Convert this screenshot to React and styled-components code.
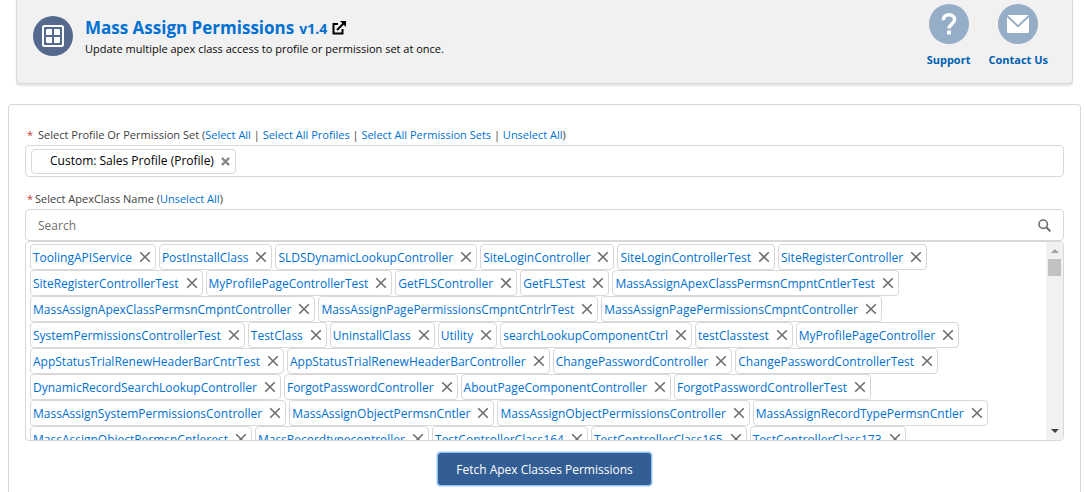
import React from "react";
import styled, { createGlobalStyle } from "styled-components";

const GlobalStyle = createGlobalStyle`
  *, *::before, *::after { box-sizing: border-box; }
  body {
    margin: 0;
    background: #fff;
    color: #3e3e3c;
    font-family: "Open Sans", "Noto Sans", sans-serif;
    font-size: 12px;
    line-height: 18px;
  }
  button, input { font-family: inherit; }
`;

const Page = styled.div`
  min-height: 100vh;
  display: flex;
  flex-direction: column;
  gap: 20px;
  padding: 0 5px 0 8px;
`;

const Header = styled.header`
  display: flex;
  justify-content: space-between;
  align-items: flex-start;
  height: 84px;
  margin: 0 8px;
  padding: 4px 24px 0 16px;
  background: #f1f1f1;
  border: 1px solid #d8d8d8;
  border-top: 0;
  border-radius: 0 0 4px 4px;
  box-shadow: 0 2px 2px rgba(0, 0, 0, 0.1);
`;

const Brand = styled.div`
  display: flex;
  gap: 12px;
  padding-top: 12px;
`;

const RoundIcon = styled.span`
  display: flex;
  align-items: center;
  justify-content: center;
  width: 40px;
  height: 40px;
  border-radius: 50%;
  background: ${(p) => p.$color};
`;

const Title = styled.h1`
  display: flex;
  align-items: baseline;
  gap: 5px;
  margin: 0;
  font-size: 17px;
  line-height: 24px;
  font-weight: 700;
  color: #0070d2;
`;

const Version = styled.span`
  font-size: 14px;
`;

const TitleLink = styled.a`
  align-self: center;
  display: flex;
  padding-bottom: 2px;
  color: #000;
`;

const Tagline = styled.p`
  margin: 0;
  font-size: 11px;
  line-height: 16px;
  color: #080707;
`;

const HelpLinks = styled.nav`
  display: flex;
  gap: 18px;
`;

const HelpLink = styled.a`
  display: flex;
  flex-direction: column;
  align-items: center;
  gap: 7px;
  color: #005fb2;
  font-size: 11px;
  font-weight: 700;
  text-decoration: none;
`;

const Card = styled.main`
  flex: 1;
  display: flex;
  flex-direction: column;
  padding: 20px 16px 4px;
  border: 1px solid #d8d8d8;
  border-bottom: 0;
  border-radius: 4px 4px 0 0;
`;

const FieldLabel = styled.div`
  display: flex;
  gap: ${(p) => p.$gap}px;
  height: 20px;
  padding-left: 2px;
  font-size: 11px;
  line-height: 20px;
  white-space: nowrap;
`;

const Required = styled.abbr`
  color: #c23934;
  text-decoration: none;
`;

const TextAction = styled.a`
  color: #0070d2;
  text-decoration: none;
`;

const TokenBox = styled.div`
  display: flex;
  align-items: center;
  height: 32px;
  margin-bottom: 12px;
  padding: 0 5px;
  border: 1px solid #d8d8d8;
  border-radius: 4px;
`;

const Token = styled.span`
  display: flex;
  align-items: center;
  gap: 7px;
  height: 25px;
  padding: 0 5px 0 18px;
  border: 1px solid #d8d8d8;
  border-radius: 4px;
  font-size: 12px;
  color: #000;
`;

const IconButton = styled.button`
  display: flex;
  padding: 0;
  border: 0;
  background: none;
  color: ${(p) => p.$color || "#706e6b"};
`;

const SearchBox = styled.div`
  display: flex;
  align-items: center;
  height: 32px;
  padding: 0 12px;
  border: 1px solid #d8d8d8;
  border-radius: 4px;
`;

const SearchInput = styled.input`
  flex: 1;
  min-width: 0;
  padding: 0;
  border: 0;
  outline: 0;
  background: none;
  font-size: 12px;
  color: #3e3e3c;
  &::placeholder { color: #706e6b; opacity: 1; }
`;

const ListBox = styled.div`
  display: flex;
  height: 200px;
  border: 1px solid #d8d8d8;
  border-radius: 4px;
  overflow: hidden;
`;

const ChipList = styled.ul`
  flex: 1;
  display: flex;
  flex-wrap: wrap;
  align-content: flex-start;
  column-gap: 3px;
  margin: 0;
  padding: 2px 4px;
  list-style: none;
  overflow: hidden;
`;

const Chip = styled.li`
  display: flex;
  align-items: center;
  gap: 7px;
  height: 26px;
  padding: 0 4px 0 2px;
  border: 1px solid #d8d8d8;
  border-radius: 4px;
`;

const ChipLink = styled(TextAction)`
  padding-top: 2px;
`;

const ScrollTrack = styled.div`
  display: flex;
  flex-direction: column;
  align-items: center;
  justify-content: space-between;
  width: 17px;
  padding: 7px 0;
  background: #f1f1f1;
`;

const ScrollTop = styled.div`
  display: flex;
  flex-direction: column;
  align-items: center;
  gap: 6px;
`;

const ScrollThumb = styled.div`
  width: 13px;
  height: 17px;
  background: #c1c1c1;
`;

const FetchButton = styled.button`
  align-self: center;
  height: 34px;
  margin-top: 11px;
  padding: 0 18px;
  border: 1px solid #8fc1ee;
  border-radius: 4px;
  background: #335d95;
  box-shadow: 0 0 2px #5ea6e6;
  color: #fff;
  font-size: 12px;
`;

const CHIPS = [
  "ToolingAPIService", "PostInstallClass", "SLDSDynamicLookupController", "SiteLoginController",
  "SiteLoginControllerTest", "SiteRegisterController",
  "SiteRegisterControllerTest", "MyProfilePageControllerTest", "GetFLSController", "GetFLSTest",
  "MassAssignApexClassPermsnCmpntCntlerTest",
  "MassAssignApexClassPermsnCmpntController", "MassAssignPagePermissionsCmpntCntrlrTest",
  "MassAssignPagePermissionsCmpntController",
  "SystemPermissionsControllerTest", "TestClass", "UninstallClass", "Utility",
  "searchLookupComponentCtrl", "testClasstest", "MyProfilePageController",
  "AppStatusTrialRenewHeaderBarCntrTest", "AppStatusTrialRenewHeaderBarController",
  "ChangePasswordController", "ChangePasswordControllerTest",
  "DynamicRecordSearchLookupController", "ForgotPasswordController",
  "AboutPageComponentController", "ForgotPasswordControllerTest",
  "MassAssignSystemPermissionsController", "MassAssignObjectPermsnCntler",
  "MassAssignObjectPermissionsController", "MassAssignRecordTypePermsnCntler",
  "MassAssignObjectPermsnCntlerest", "MassRecordtypecontroller", "TestControllerClass164",
  "TestControllerClass165", "TestControllerClass173",
];

const Cross = ({ size = 12, weight = 1.6 }) => (
  <svg width={size} height={size} viewBox="0 0 12 12" fill="none" stroke="currentColor" strokeWidth={weight}>
    <path d="M1.2 1.2 10.8 10.8M10.8 1.2 1.2 10.8" />
  </svg>
);

const Arrow = ({ up, color }) => (
  <svg width="8" height="4" viewBox="0 0 8 4" fill={color}>
    <path d={up ? "M0 4 4 0 8 4Z" : "M0 0H8L4 4Z"} />
  </svg>
);

export default function App() {
  return (
    <>
      <GlobalStyle />
      <Page>
        <Header>
          <Brand>
            <RoundIcon $color="#54698d">
              <svg width="22" height="22" viewBox="0 0 22 22" fill="none">
                <rect x="1" y="1" width="20" height="20" rx="1.5" stroke="#fff" strokeWidth="2" />
                <path d="M5 4h5v6H4V5zM12 4h5l1 1v5h-6zM4 12h6v6H5l-1-1zM12 12h6v5l-1 1h-5z" fill="#fff" />
              </svg>
            </RoundIcon>
            <div>
              <Title>
                Mass Assign Permissions
                <Version>v1.4</Version>
                <TitleLink href="#open" aria-label="Open in new window">
                  <svg width="14" height="14" viewBox="0 0 14 14" fill="none" stroke="currentColor" strokeWidth="2">
                    <path d="M6 3H1.500v9.500H10.500V8" />
                    <path d="M5 9 12 2" />
                    <path d="M8 0h6v6z" fill="currentColor" stroke="none" />
                  </svg>
                </TitleLink>
              </Title>
              <Tagline>Update multiple apex class access to profile or permission set at once.</Tagline>
            </div>
          </Brand>
          <HelpLinks>
            <HelpLink href="#support">
              <RoundIcon $color="#95adc7">
                <svg width="16" height="24" viewBox="0 0 16 24" fill="none" stroke="#fff">
                  <path d="M2.200 8.200C2.200 4.800 4.500 2.800 8 2.800c3.400 0 5.600 2 5.600 4.800 0 4.400-5.600 4.600-5.600 8.900" strokeWidth="3.400" />
                  <path d="M6 20.500h4" strokeWidth="4" />
                </svg>
              </RoundIcon>
              Support
            </HelpLink>
            <HelpLink href="#contact">
              <RoundIcon $color="#95adc7">
                <svg width="22" height="18" viewBox="0 0 22 18" fill="#fff">
                  <path d="M.5 0h21L11 10z" />
                  <path d="M0 2.200 11 12.500 22 2.200V16.500a1.500 1.500 0 0 1-1.500 1.500h-19A1.500 1.500 0 0 1 0 16.500z" />
                </svg>
              </RoundIcon>
              Contact Us
            </HelpLink>
          </HelpLinks>
        </Header>
        <Card>
          <FieldLabel $gap={5}>
            <Required title="required">*</Required>
            <span>
              Select Profile Or Permission Set (<TextAction href="#all">Select All</TextAction> |{" "}
              <TextAction href="#profiles">Select All Profiles</TextAction> |{" "}
              <TextAction href="#sets">Select All Permission Sets</TextAction> |{" "}
              <TextAction href="#none">Unselect All</TextAction>)
            </span>
          </FieldLabel>
          <TokenBox>
            <Token>
              Custom: Sales Profile (Profile)
              <IconButton type="button" aria-label="Remove profile" $color="#888">
                <Cross size={9} weight={3} />
              </IconButton>
            </Token>
          </TokenBox>
          <FieldLabel $gap={2}>
            <Required title="required">*</Required>
            <span>
              <label htmlFor="apex-search">Select ApexClass Name</label> (
              <TextAction href="#unselect">Unselect All</TextAction>)
            </span>
          </FieldLabel>
          <SearchBox>
            <SearchInput id="apex-search" type="text" placeholder="Search" />
            <IconButton type="button" aria-label="Search">
              <svg width="13" height="13" viewBox="0 0 13 13" fill="none" stroke="currentColor" strokeWidth="1.600">
                <circle cx="5.200" cy="5.200" r="4.200" />
                <path d="M8.500 8.500 12.300 12.300" strokeWidth="2" />
              </svg>
            </IconButton>
          </SearchBox>
          <ListBox>
            <ChipList>
              {CHIPS.map((name) => (
                <Chip key={name}>
                  <ChipLink href={"#" + name}>{name}</ChipLink>
                  <IconButton type="button" aria-label={"Remove " + name}>
                    <Cross />
                  </IconButton>
                </Chip>
              ))}
            </ChipList>
            <ScrollTrack>
              <ScrollTop>
                <Arrow up color="#a3a3a3" />
                <ScrollThumb />
              </ScrollTop>
              <Arrow color="#404040" />
            </ScrollTrack>
          </ListBox>
          <FetchButton type="button">Fetch Apex Classes Permissions</FetchButton>
        </Card>
      </Page>
    </>
  );
}
